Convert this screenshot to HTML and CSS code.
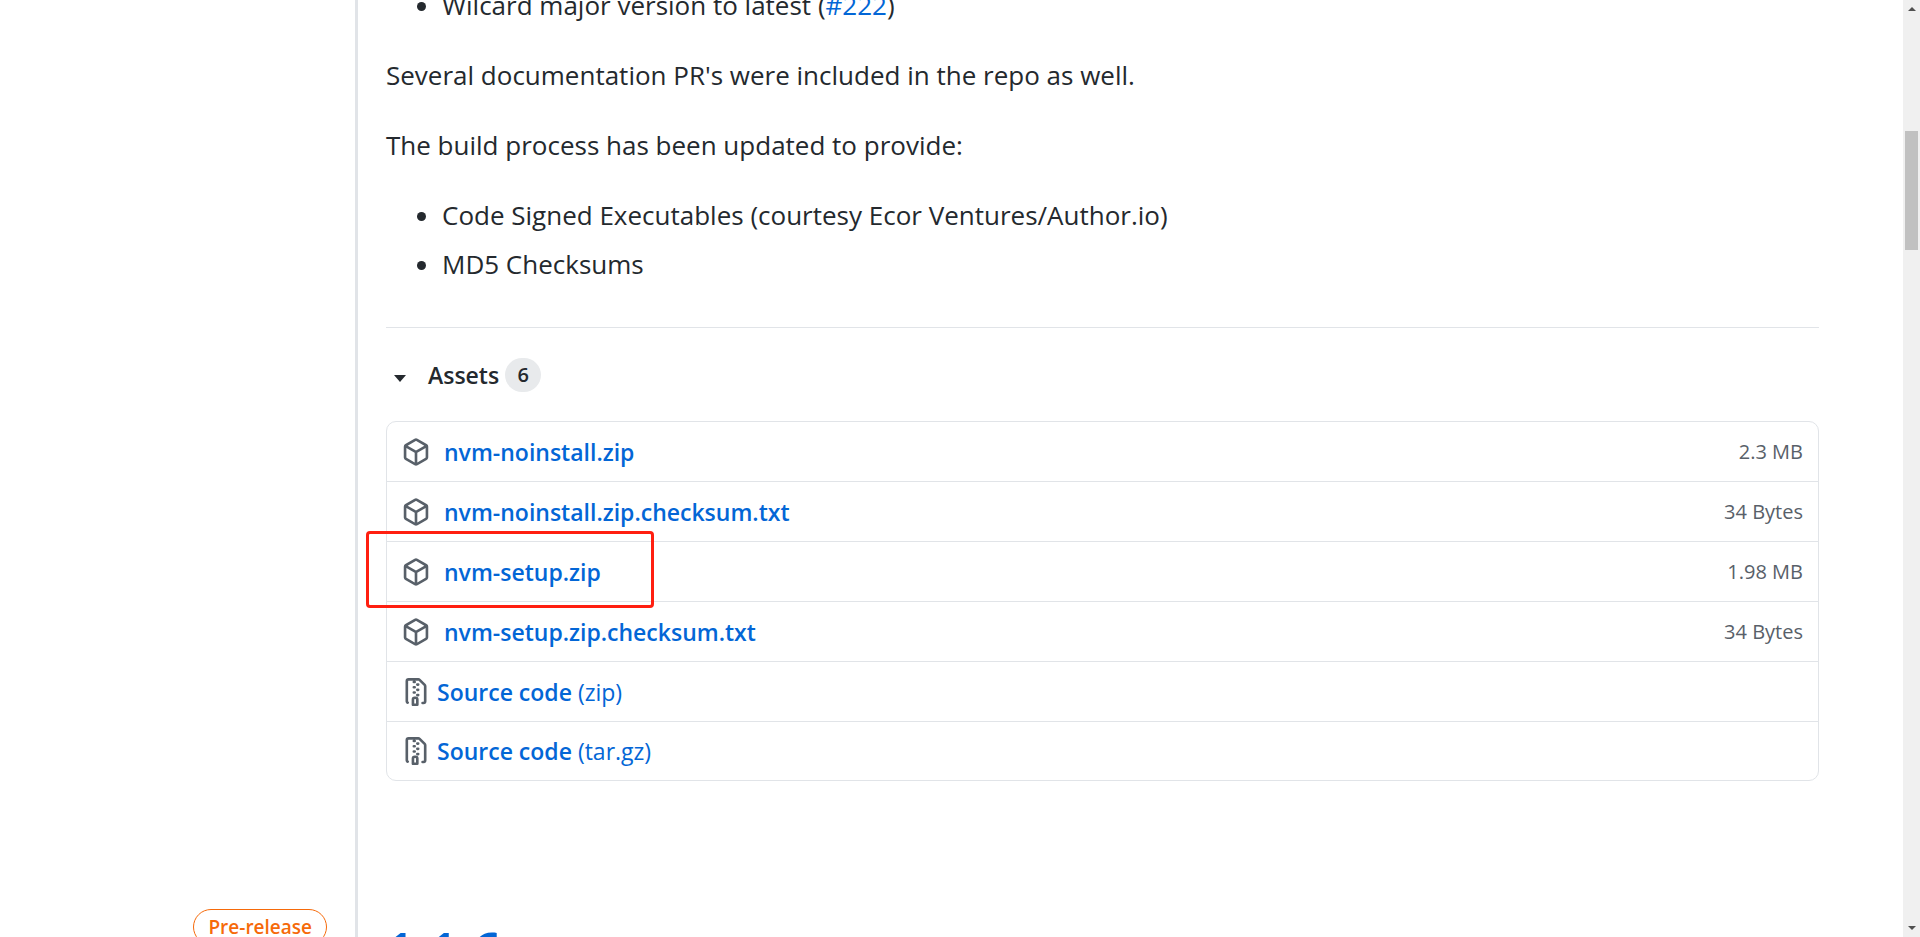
FILE: index.html
```html
<!DOCTYPE html>
<html lang="en">
<head>
<meta charset="utf-8">
<title>Releases</title>
<link rel="stylesheet" href="styles.css">
</head>
<body>
<svg class="sprite" aria-hidden="true">
  <symbol id="package" viewBox="0 0 16 16"><path fill-rule="evenodd" d="M8.878.392a1.75 1.75 0 00-1.756 0l-5.25 3.045A1.75 1.75 0 001 4.951v6.098c0 .624.332 1.2.872 1.514l5.25 3.045a1.75 1.75 0 001.756 0l5.25-3.045c.54-.313.872-.89.872-1.514V4.951c0-.624-.332-1.2-.872-1.514L8.878.392zM7.875 1.69a.25.25 0 01.25 0l4.63 2.685L8 7.133 3.245 4.375l4.63-2.685zM2.5 5.677v5.372c0 .09.047.171.125.216l4.625 2.683V8.432L2.5 5.677zm6.25 8.271l4.625-2.683a.25.25 0 00.125-.216V5.677L8.75 8.432v5.516z"/></symbol>
  <symbol id="file-zip" viewBox="0 0 16 16"><path fill-rule="evenodd" d="M3.5 1.75a.25.25 0 01.25-.25h3a.75.75 0 000 1.5h.5a.75.75 0 000-1.5h2.086a.25.25 0 01.177.073l2.914 2.914a.25.25 0 01.073.177v8.586a.25.25 0 01-.25.25h-.5a.75.75 0 000 1.5h.5A1.75 1.75 0 0014 13.25V4.664c0-.464-.184-.909-.513-1.237L10.573.513A1.75 1.75 0 009.336 0H3.75A1.75 1.75 0 002 1.75v11.5c0 .649.353 1.214.874 1.515a.75.75 0 10.752-1.298.25.25 0 01-.126-.217V1.75zM8.75 3a.75.75 0 000 1.5h.5a.75.75 0 000-1.5h-.5zM6 5.25a.75.75 0 01.75-.75h.5a.75.75 0 010 1.5h-.5A.75.75 0 016 5.25zm2 1.5A.75.75 0 018.75 6h.5a.75.75 0 010 1.5h-.5A.75.75 0 018 6.75zm-1.25.75a.75.75 0 000 1.5h.5a.75.75 0 000-1.5h-.5zM8 9.75A.75.75 0 018.75 9h.5a.75.75 0 010 1.5h-.5A.75.75 0 018 9.75zm-.75.75a1.75 1.75 0 00-1.75 1.75v3c0 .414.336.75.75.75h2.5a.75.75 0 00.75-.75v-3a1.75 1.75 0 00-1.75-1.75h-.5zM7 12.25a.25.25 0 01.25-.25h.5a.25.25 0 01.25.25v2.25H7v-2.25z"/></symbol>
</svg>
<div class="viewport">
  <main class="timeline">
    <section class="release">
      <div class="release-meta"></div>
      <div class="release-body">
        <div class="notes">
          <ul>
            <li>Wilcard major version to latest (<a href="#222">#222</a>)</li>
          </ul>
          <p>Several documentation PR's were included in the repo as well.</p>
          <p>The build process has been updated to provide:</p>
          <ul>
            <li>Code Signed Executables (courtesy Ecor Ventures/Author.io)</li>
            <li>MD5 Checksums</li>
          </ul>
        </div>
        <details class="assets" open>
          <summary><span class="caret"></span><span class="assets-title">Assets</span><span class="counter">6</span></summary>
          <ul class="asset-list">
            <li><a href="#a1"><svg class="icon"><use href="#package"/></svg><span class="file">nvm-noinstall.zip</span></a><span class="size">2.3 MB</span></li>
            <li><a href="#a2"><svg class="icon"><use href="#package"/></svg><span class="file">nvm-noinstall.zip.checksum.txt</span></a><span class="size">34 Bytes</span></li>
            <li><a href="#a3"><svg class="icon"><use href="#package"/></svg><span class="file">nvm-setup.zip</span></a><span class="size">1.98 MB</span><span class="highlight"></span></li>
            <li><a href="#a4"><svg class="icon"><use href="#package"/></svg><span class="file">nvm-setup.zip.checksum.txt</span></a><span class="size">34 Bytes</span></li>
            <li><a href="#a5"><svg class="icon"><use href="#file-zip"/></svg><span class="source"><strong>Source code</strong> (zip)</span></a></li>
            <li><a href="#a6"><svg class="icon"><use href="#file-zip"/></svg><span class="source"><strong>Source code</strong> (tar.gz)</span></a></li>
          </ul>
        </details>
      </div>
    </section>
    <section class="release">
      <div class="release-meta"><span class="label">Pre-release</span></div>
      <div class="release-body"><h1><a href="#v116">1.1.6</a></h1></div>
    </section>
  </main>
  <div class="scrollbar" aria-hidden="true">
    <span class="arrow up"></span>
    <span class="thumb"></span>
    <span class="arrow down"></span>
  </div>
</div>
</body>
</html>
```
FILE: styles.css
```css
* { box-sizing: border-box; }

body {
  margin: 0;
  color: #24292e;
  background: #fff;
  font-family: "Open Sans", "Noto Sans", sans-serif;
  font-size: 26px;
  line-height: 42px;
}

a { color: #0366d6; text-decoration: none; }
ul { margin: 0; padding: 0; }
.sprite { display: none; }

.viewport {
  display: flex;
  height: 100vh;
  overflow: hidden;
}

.timeline {
  flex: 1;
  margin-top: -16px;
}

.release {
  display: grid;
  grid-template-columns: 355px 1fr;
}

.release-meta {
  display: flex;
  justify-content: flex-end;
  align-items: flex-start;
  padding-right: 28px;
}

.release-body {
  padding: 0 84px 128px 28px;
  border-left: 3px solid #e1e4e8;
}

.notes {
  padding-bottom: 42px;
  border-bottom: 1px solid #e1e4e8;
}
.notes ul { padding-left: 56px; }
.notes li + li { margin-top: 7px; }
.notes p { margin: 28px 0; }

.assets summary {
  display: flex;
  align-items: center;
  height: 34px;
  margin: 30px 0 29px;
  font-size: 23px;
  list-style: none;
}
.caret {
  margin: 6px 22px 0 8px;
  border: 6px solid transparent;
  border-top: 7px solid #24292e;
  border-bottom: 0;
}
.assets-title,
.counter,
.file,
.source strong,
.label,
h1 {
  font-weight: 600;
}
.counter {
  min-width: 36px;
  height: 34px;
  margin-left: 6px;
  border-radius: 17px;
  background: #e8eaec;
  font-size: 20px;
  line-height: 34px;
  text-align: center;
}

.asset-list {
  border: 1px solid #e1e4e8;
  border-radius: 10px;
  font-size: 23px;
  list-style: none;
}
.asset-list li {
  position: relative;
  display: flex;
  justify-content: space-between;
  align-items: center;
  height: 60px;
  padding: 0 15px;
}
.asset-list li:first-child,
.asset-list li:last-child { height: 59px; }
.asset-list li + li { border-top: 1px solid #e1e4e8; }
.asset-list a { display: flex; align-items: center; }
.icon { width: 28px; height: 28px; fill: #586069; }
.file { margin-left: 14px; }
.source { margin-left: 7px; }
.size { color: #586069; font-size: 20px; }

.highlight {
  position: absolute;
  z-index: 1;
  top: -11px;
  left: -21px;
  width: 288px;
  height: 77px;
  border: 3px solid #ff1f10;
  border-radius: 4px;
}

.label {
  padding: 0 14px;
  border: 1px solid #f66a0a;
  border-radius: 18px;
  color: #f66a0a;
  font-size: 19px;
  line-height: 34px;
}

h1 {
  margin: 9px 0 0;
  font-size: 51px;
  line-height: 62px;
}

.scrollbar {
  display: flex;
  flex-direction: column;
  align-items: center;
  width: 17px;
  background: #f0f0f0;
}
.arrow {
  border: 4px solid transparent;
}
.up { margin-top: 7px; border-top: 0; border-bottom-color: #505050; }
.down { margin-top: auto; margin-bottom: 7px; border-bottom: 0; border-top-color: #505050; }
.thumb {
  width: 13px;
  height: 119px;
  margin-top: 120px;
  background: #c1c1c1;
}
```
